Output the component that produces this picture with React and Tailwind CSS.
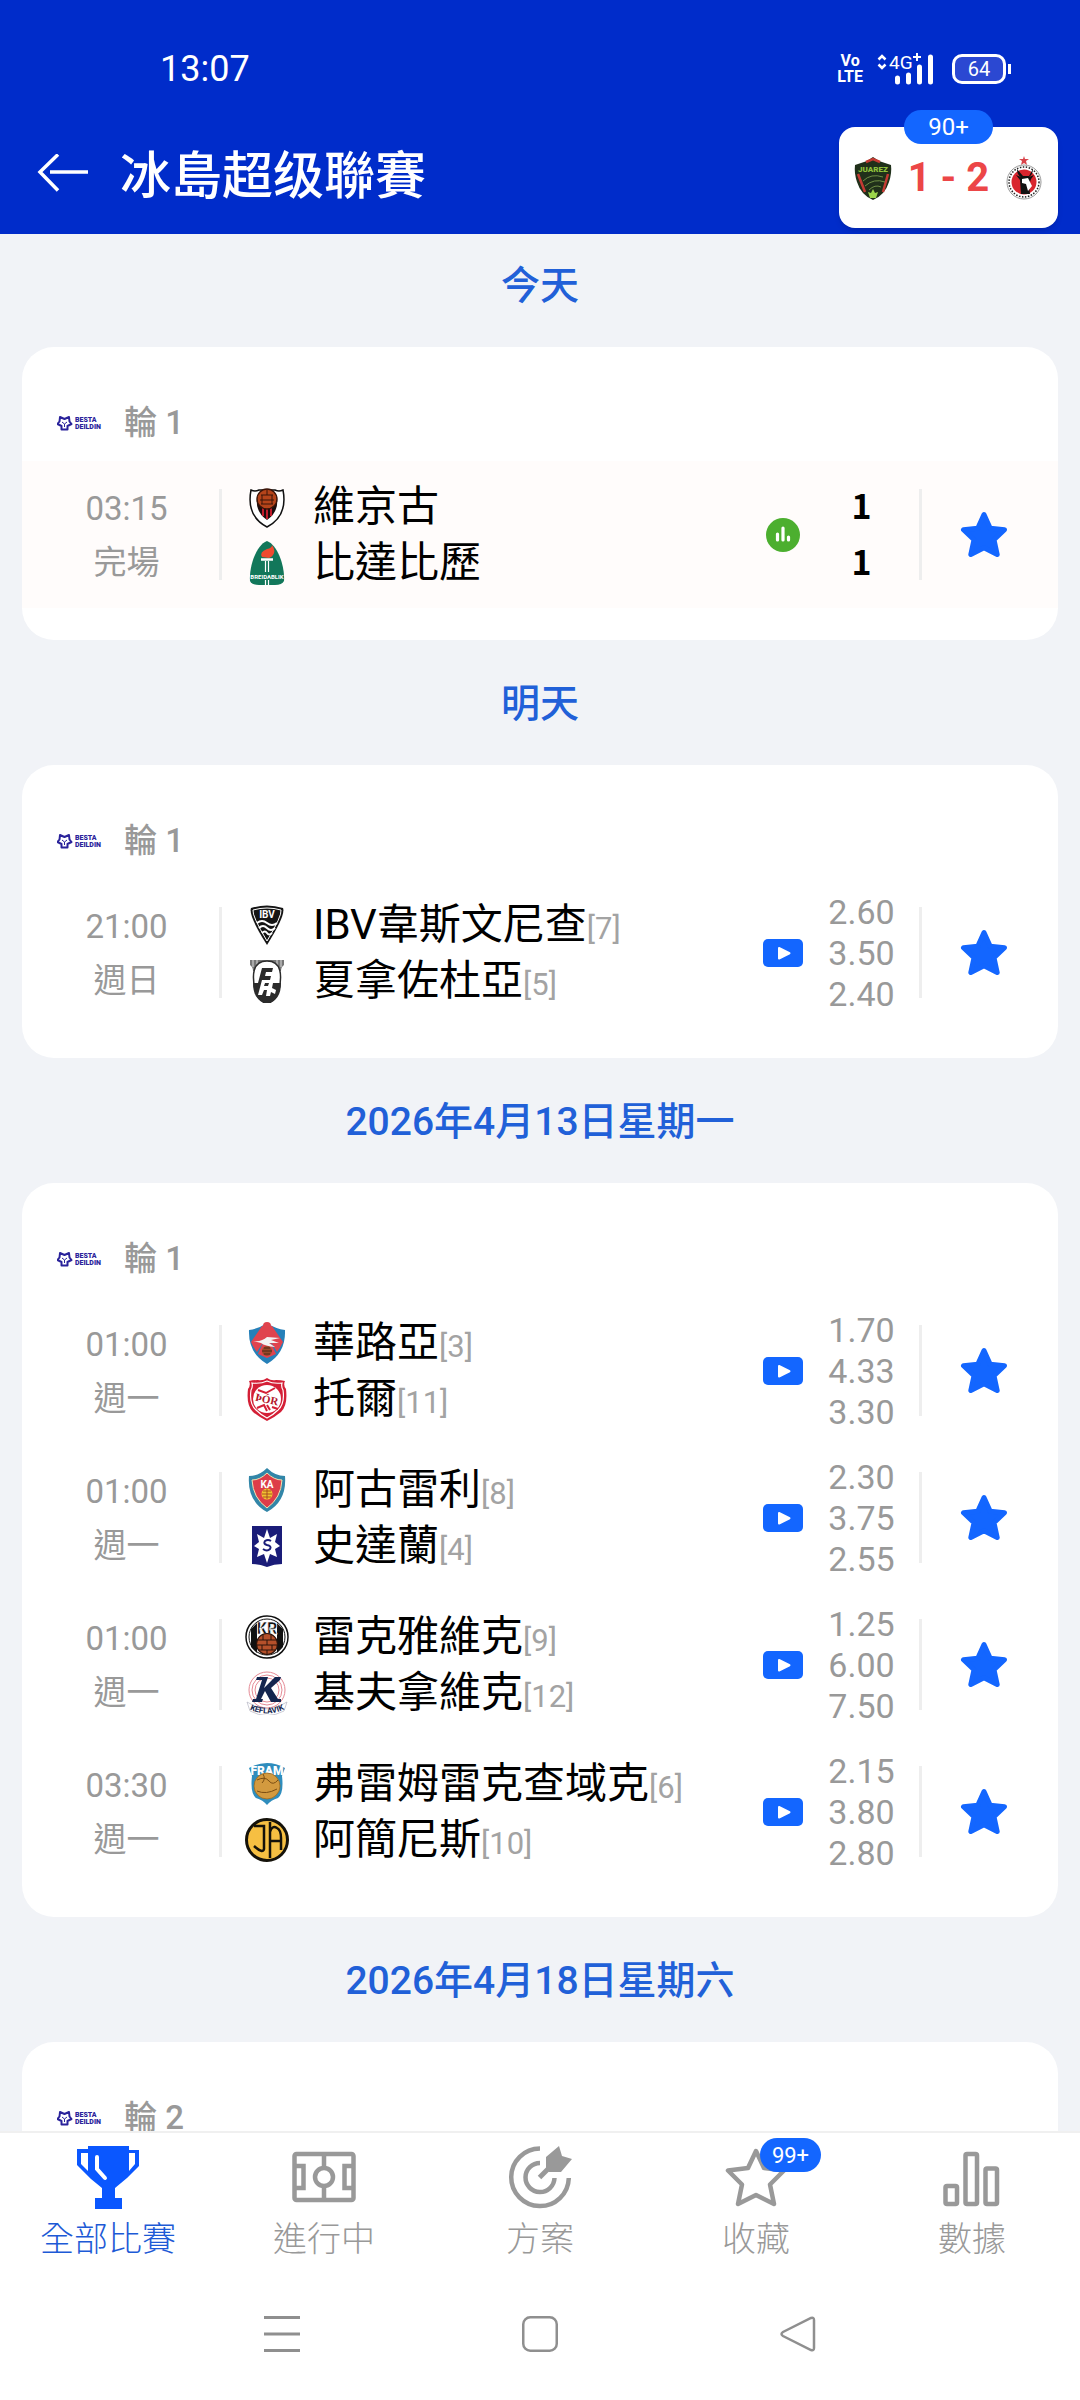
import { useState } from 'react'

const FONT = "font-[Roboto,'Noto_Sans_CJK_TC',sans-serif]"

// ---- team crests, all drawn on a 44x44 canvas ----

const Crest = ({ title, children }) => (
  <svg viewBox="0 0 44 44" className="w-11 h-11 shrink-0" role="img" aria-label={title}>
    {children}
  </svg>
)

const crests = {
  vikingur: (
    <>
      <path d="M6 5 Q10 7 14 5 L30 5 Q34 7 38 5 Q43 31 22 42 Q1 31 6 5Z" fill="#fff" stroke="#111" strokeWidth="1.5" />
      <path d="M12 12 L32 12 Q34 27 22 35 Q10 27 12 12Z" fill="#1a0d0d" />
      <path d="M18 20v11M22 20v14M26 20v11" stroke="#c01c2c" strokeWidth="2" />
      <circle cx="22" cy="14" r="10" fill="#b5441a" stroke="#3a1408" strokeWidth="1.3" />
      <path d="M16 10h12M15 15h14M17 10v9M27 10v9M16 19h12M22 5v5" stroke="#3a1408" strokeWidth="1" fill="none" />
    </>
  ),
  breidablik: (
    <>
      <path d="M22 0 C33 4 40 26 39 40 Q37 44 30 44 L14 44 Q7 44 5 40 C4 26 11 4 22 0Z" fill="#12775a" />
      <path d="M17 16 Q14 11 22 8 Q27 7 27 4 Q31 10 28 14 Q27 16 24 17Z" fill="#f0492f" />
      <path d="M16 18.5h12" stroke="#fff" strokeWidth="2.500" />
      <path d="M20.500 20v24M23.500 20v24" stroke="#fff" strokeWidth="1.200" />
      <rect x="7" y="31" width="30" height="8" fill="#12775a" />
      <text x="22" y="37.500" textAnchor="middle" fontSize="6" fontWeight="700" fill="#fff" fontFamily="Roboto, sans-serif">
        BREIDABLIK
      </text>
    </>
  ),
  ibv: (
    <>
      <path d="M6 5 Q22 0 38 5 Q41 12 22 42 Q3 12 6 5Z" fill="#151515" />
      <path d="M8 7 Q22 3 36 7 Q37 13 22 38 Q7 13 8 7Z" fill="none" stroke="#fff" strokeWidth="1" />
      <text x="22" y="15" textAnchor="middle" fontSize="10" fontWeight="700" fill="#fff" fontFamily="Roboto, sans-serif">IBV</text>
      <path d="M12 20q5-4 10 0t10 0M14 25q4-4 8 0t8 0M17 30q3-3 5 0t5 0" fill="none" stroke="#fff" strokeWidth="2" />
    </>
  ),
  fh: (
    <>
      <path d="M5 1h34v5q-3 2-3 6H8q0-4-3-6Z" fill="#777" />
      <path d="M8 1v7M12 1v7M32 1v7M36 1v7" stroke="#ddd" strokeWidth="1" />
      <path d="M22 2 C37 2 37 17 34 31 Q30 44 22 44 Q14 44 10 31 C7 17 7 2 22 2Z" fill="#fff" stroke="#2b2b2b" strokeWidth="1.5" />
      <path d="M8 24 L36 24 Q36 42 22 44 Q8 42 8 24Z" fill="#2b2b2b" />
      <path d="M17 9h11l-1 4h-6l-1 4h6l-1 4h-6l-1 3h-5Z" fill="#2b2b2b" />
      <path d="M17 21h4l-2 6h4l1-3h4l-1 5 4 2-1 4-4-2-1 4h-4l1-6h-3l-2 5h-4Z" fill="#fff" />
    </>
  ),
  valur: (
    <>
      <path d="M4 9 Q13 8 22 2 Q31 8 40 9 Q41 32 22 43 Q3 32 4 9Z" fill="#2680b9" />
      <path d="M17 5 L27 5 L38 21 Q35 27 32 31 L22 15 L12 31 Q8 26 6 21Z" fill="#e0434e" />
      <path d="M22 13 L31 33 L22 37 L13 33Z" fill="#e0434e" />
      <circle cx="22" cy="5" r="4" fill="#e0434e" />
      <path d="M8 20 Q17 21 22 16 L35 17 L26 19 L34 22 L24 22 L30 26 Q20 25 16 22Z" fill="#f3f3f3" />
      <circle cx="22" cy="30" r="5" fill="#9a4a2a" />
      <path d="M17 30h10M19 27h6M19 33h6" stroke="#3a2015" strokeWidth=".8" />
    </>
  ),
  thor: (
    <>
      <path d="M22 1 Q26 4 31 3 Q36 3 40 4 Q38 8 41 12 Q43 28 36 35 Q30 40 22 44 Q14 40 8 35 Q1 28 3 12 Q6 8 4 4 Q8 3 13 3 Q18 4 22 1Z" fill="#d41f36" />
      <path d="M22 4 Q28 7 37 6 Q36 10 38 13 Q40 27 33 33 Q28 38 22 41 Q16 38 11 33 Q4 27 6 13 Q8 10 7 6 Q16 7 22 4Z" fill="none" stroke="#fff" strokeWidth="1.2" />
      <circle cx="22" cy="22" r="14" fill="#fff" />
      <path d="M13 13l8 3 9-5M12 31l7-3 3 6M27 30l6 2M22 28l3 5" stroke="#d41f36" strokeWidth="2" fill="none" />
      <text x="22" y="26" textAnchor="middle" fontSize="11" fontWeight="700" fill="#b3162b" transform="rotate(12 22 22)" fontFamily="Liberation Serif, serif">ÞÓR</text>
    </>
  ),
  ka: (
    <>
      <path d="M22 0 Q30 8 40 8 Q42 33 22 44 Q2 33 4 8 Q14 8 22 0Z" fill="#3286a8" />
      <path d="M22 5 Q29 12 37 12 Q36 30 22 40 Q8 30 7 12 Q15 12 22 5Z" fill="#dd3c49" stroke="#efe3b0" strokeWidth="1" />
      <text x="22" y="20" textAnchor="middle" fontSize="10" fontWeight="700" fill="#fff" fontFamily="Roboto, sans-serif">KA</text>
      <circle cx="22" cy="26" r="5.5" fill="#f2c230" />
      <path d="M17 26h10M18 23h8M18 29h8M22 21v10" stroke="#a3451f" strokeWidth=".9" />
    </>
  ),
  stjarnan: (
    <>
      <path d="M7 2h30v38q-8 0-15 3-7-3-15-3Z" fill="#1a1c78" />
      <path d="M22 5l3 9 7-4-2 8 5 4-5 3 2 8-7-3-3 9-3-9-7 3 2-8-5-3 5-4-2-8 7 4Z" fill="#fff" />
      <path d="M26 17q-3-2-6 0-2 3 2 4 5 1 3 4-3 3-7 0" fill="none" stroke="#1a1c78" strokeWidth="2" />
    </>
  ),
  kr: (
    <>
      <circle cx="22" cy="22" r="21" fill="#fff" stroke="#111" strokeWidth="1.5" />
      <path d="M6 14v18l6 6V8ZM38 14v18l-6 6V8Z" fill="#111" />
      <text x="22" y="19" textAnchor="middle" fontSize="16" fontWeight="900" fill="#111" stroke="#fff" strokeWidth=".6" fontFamily="Roboto, sans-serif">KR</text>
      <circle cx="22" cy="22" r="18" fill="none" stroke="#111" strokeWidth="1" />
      <circle cx="22" cy="29" r="10.500" fill="#b5502a" stroke="#2a120a" strokeWidth="1.2" />
      <path d="M12 25h20M11 30h22M14 35h16M18 19v6M26 19v6M22 25v5M17 30v5M27 30v5M22 35v5" stroke="#2a120a" strokeWidth="1" />
    </>
  ),
  keflavik: (
    <>
      <circle cx="22" cy="19" r="18" fill="#fff" stroke="#e58a95" strokeWidth="1" />
      <circle cx="22" cy="19" r="15" fill="none" stroke="#e58a95" strokeWidth="1" />
      <circle cx="22" cy="19" r="12" fill="none" stroke="#e58a95" strokeWidth="1" />
      <path d="M12 6h11l-1 3-3 8L30 6h6l-1 3-9 8 7 11h3v3H26l-6-11-4 8h2l-1 3H7l1-3h3l6-19h-6Z" fill="#14264f" />
      <path d="M2 31Q22 45 42 31L39 40Q22 49 5 40Z" fill="#fff" stroke="#aab" strokeWidth=".6" />
      <path id="kef-arc" d="M2 37Q22 48 42 37" fill="none" />
      <text fontSize="8" fontWeight="700" fill="#14264f" textAnchor="middle" fontFamily="Roboto, sans-serif">
        <textPath href="#kef-arc" startOffset="50%">KEFLAVIK</textPath>
      </text>
    </>
  ),
  fram: (
    <>
      <path d="M4 6 Q22 -4 40 6 L37 14 Q39 31 33 36 Q26 38 22 43 Q18 38 11 36 Q5 31 7 14Z" fill="#2f8dbd" />
      <text x="22" y="13" textAnchor="middle" fontSize="12" fontWeight="900" fill="#fff" fontFamily="Roboto, sans-serif">FRAM</text>
      <circle cx="22" cy="24" r="13" fill="#d39a3f" stroke="#9b6a20" strokeWidth=".8" />
      <path d="M12 18q8-4 12 1t9-1M12 29q9 4 20-2M18 12q3 5-1 9" stroke="#7a4d12" strokeWidth="1" fill="none" />
    </>
  ),
  ia: (
    <>
      <circle cx="22" cy="22" r="20.5" fill="#f6bf42" stroke="#15120a" strokeWidth="3" />
      <path d="M9 8h10v23q-1 5-10-3M25 40V4M25 14q2-7 7-4 4 2 4 10v12M25 23h11" fill="none" stroke="#15120a" strokeWidth="2.500" />
    </>
  ),
  juarez: (
    <>
      <path d="M22 1l6 4 12 4q1 8-2 17Q34 39 22 44 10 39 6 26 3 17 4 9l12-4Z" fill="#20301a" />
      <path d="M7 18l7 18M37 18l-5 18M15 6l7-3 7 3" stroke="#c43a33" strokeWidth="2.5" fill="none" />
      <text x="22" y="16" textAnchor="middle" fontSize="8" fontWeight="900" fill="#8fc23c" fontFamily="Roboto, sans-serif">JUAREZ</text>
      <path d="M12 25q8-8 20-4M14 30q9-8 20-4M18 34q6-6 12-3" stroke="#6f8f45" strokeWidth="1" fill="none" />
      <path d="M22 33l2 4 3-1-2 6h-6l-2-6 3 1Z" fill="#9bd54a" />
    </>
  ),
  tijuana: (
    <>
      <path d="M22 0l1 3h4l-3 2 1 4-3-2-3 2 1-4-3-2h4Z" fill="#d8434a" />
      <circle cx="22" cy="26" r="17" fill="#fff" stroke="#999" strokeWidth="1" />
      <circle cx="22" cy="26" r="15" fill="none" stroke="#222" strokeWidth="1.5" strokeDasharray="1.5 1.5" />
      <circle cx="22" cy="26" r="12.500" fill="#d9252e" />
      <path d="M15 13q0 6 4 8l-5-2 4 5 1 14h9l-1-9 2-6 3-4-5 2q4-3 4-8l-4 7h-6Z" fill="#111" />
      <path d="M20 23l6-1 4 8-4 5-2-7-4-1Z" fill="#fff" />
    </>
  )
}

const days = [
  {
    label: '今天',
    round: 1,
    matches: [
      { time: '03:15', state: '完場', finished: true, home: ['vikingur', '維京古'], away: ['breidablik', '比達比歷'], score: [1, 1] }
    ]
  },
  {
    label: '明天',
    round: 1,
    matches: [
      { time: '21:00', state: '週日', home: ['ibv', 'IBV韋斯文尼查', 7], away: ['fh', '夏拿佐杜亞', 5], odds: ['2.60', '3.50', '2.40'] }
    ]
  },
  {
    label: '2026年4月13日星期一',
    round: 1,
    matches: [
      { time: '01:00', state: '週一', home: ['valur', '華路亞', 3], away: ['thor', '托爾', 11], odds: ['1.70', '4.33', '3.30'] },
      { time: '01:00', state: '週一', home: ['ka', '阿古雷利', 8], away: ['stjarnan', '史達蘭', 4], odds: ['2.30', '3.75', '2.55'] },
      { time: '01:00', state: '週一', home: ['kr', '雷克雅維克', 9], away: ['keflavik', '基夫拿維克', 12], odds: ['1.25', '6.00', '7.50'] },
      { time: '03:30', state: '週一', home: ['fram', '弗雷姆雷克查域克', 6], away: ['ia', '阿簡尼斯', 10], odds: ['2.15', '3.80', '2.80'] }
    ]
  },
  { label: '2026年4月18日星期六', round: 2, matches: [] }
]

const STAR = 'M24 3.5 L30.2 17.2 L44.5 18.8 L34 28.8 L37.2 43.5 L24 36.8 L10.8 43.5 L14 28.8 L3.5 18.8 L17.8 17.2 Z'

const StarIcon = () => (
  <svg viewBox="0 0 48 48" className="w-12 h-12" aria-hidden="true">
    <path d={STAR} fill="#1366ff" stroke="#1366ff" strokeWidth="5" strokeLinejoin="round" />
  </svg>
)

const StatsIcon = () => (
  <svg viewBox="0 0 34 34" className="w-[34px] h-[34px]" role="img" aria-label="數據">
    <circle cx="17" cy="17" r="17" fill="#4caf2f" />
    <path d="M11.5 16v6M17 10v12M22.5 19v3" stroke="#fff" strokeWidth="3.2" strokeLinecap="round" />
  </svg>
)

const VideoIcon = () => (
  <svg viewBox="0 0 40 28" className="w-10 h-7" role="img" aria-label="直播">
    <rect width="40" height="28" rx="5" fill="#1366ff" />
    <path d="M16 9v10.5l10.500-5.250Z" fill="#fff" stroke="#fff" strokeWidth="2" strokeLinejoin="round" />
  </svg>
)

const LeagueLogo = () => (
  <svg viewBox="0 0 46 16" className="w-[46px] h-4" role="img" aria-label="Besta deildin">
    <path d="M3 2l4.500 2L12 2l.5 4.500L14.500 9l-4 2v3.500h-6V11l-4-2 2-2.500Z" fill="none" stroke="#2a239b" strokeWidth="2" strokeLinejoin="round" />
    <path d="M5 7l2.500 2L10 7M7.500 9v3" fill="none" stroke="#2a239b" strokeWidth="1" />
    <g fill="#2a239b" fontSize="7" fontWeight="900" fontFamily="Roboto, sans-serif">
      <text x="18" y="7">BESTA</text>
      <text x="18" y="14">DEILDIN</text>
    </g>
  </svg>
)

const StatusBar = () => (
  <div className="flex h-[138px] items-center justify-between pl-40 pr-[69px] text-white">
    <span className="text-4xl">13:07</span>
    <div className="flex items-center">
      <div className="mr-[14px] text-center text-base leading-4 font-bold">
        Vo
        <br />
        LTE
      </div>
      <svg viewBox="0 0 58 34" className="mr-[17px] w-[58px] h-[34px]" aria-hidden="true">
        <path d="M1.500 7.500 5 4l3.500 3.500M1.500 12.500 5 16l3.500-3.500" fill="none" stroke="#fff" strokeWidth="2.500" />
        <text x="12" y="17" fontSize="19" fill="#fff" fontFamily="Roboto, sans-serif">4G</text>
        <path d="M36 5h8M40 1v8" stroke="#fff" strokeWidth="2" />
        <path d="M20.500 26v4M31.500 23v7M42.500 15v15M53.500 5v25" stroke="#fff" strokeWidth="5" strokeLinecap="round" />
      </svg>
      <div className="flex h-[30px] w-[54px] items-center justify-center rounded-[10px] border-[3px] border-white bg-[#2b48d2] text-xl leading-5">
        64
      </div>
      <div className="ml-0.5 h-2.5 w-[3px] bg-white" />
    </div>
  </div>
)

const LiveScore = () => (
  <div className="absolute top-[127px] right-[22px] h-[101px] w-[219px] rounded-2xl bg-white shadow-md">
    <div className="absolute -top-[17px] left-[65px] flex h-[34px] w-[89px] items-center justify-center rounded-full bg-[#1366ff] text-2xl text-white">
      90+
    </div>
    <div className="flex h-full items-center justify-between px-3">
      <Crest title="FC Juárez">{crests.juarez}</Crest>
      <span className="text-[40px] font-bold text-[#ec4647]">1 - 2</span>
      <Crest title="Tijuana">{crests.tijuana}</Crest>
    </div>
  </div>
)

const Team = ({ team }) => {
  const [crest, name, rank] = team
  return (
    <div className="flex h-14 items-center gap-6">
      <Crest title={name}>{crests[crest]}</Crest>
      <div className="flex items-baseline whitespace-nowrap">
        <span className="text-[42px] leading-[56px] text-black">{name}</span>
        {rank && <span className="text-[31px] text-[#a3a3a3]">[{rank}]</span>}
      </div>
    </div>
  )
}

const Divider = () => <div className="h-[91px] w-[3px] shrink-0 bg-[#eee]" />

const MatchRow = ({ match }) => {
  const [starred, setStarred] = useState(true)

  return (
    <li className={`flex h-[147px] items-center ${match.finished ? 'bg-[#fffcfb]' : ''}`}>
      <div className="ml-3 w-[185px] shrink-0 pt-0.5 text-center text-[33px] leading-[54px] text-[#999]">
        <div>{match.time}</div>
        <div>{match.state}</div>
      </div>
      <Divider />
      <div className="min-w-0 flex-1 pl-[23px]">
        <Team team={match.home} />
        <Team team={match.away} />
      </div>
      <div className="flex w-[42px] shrink-0 justify-center">
        {match.finished ? <StatsIcon /> : <VideoIcon />}
      </div>
      {match.score && (
        <div className="w-[115px] shrink-0 pb-1 text-center font-['Noto_Sans_CJK_TC',sans-serif] text-[34px] leading-[56px] font-bold text-black">
          <div>{match.score[0]}</div>
          <div>{match.score[1]}</div>
        </div>
      )}
      {match.odds && (
        <div className="w-[115px] shrink-0 pt-0.5 text-center text-[34px] leading-[41px] text-[#999]">
          {match.odds.map((odd, i) => (
            <div key={i}>{odd}</div>
          ))}
        </div>
      )}
      <Divider />
      <div className="flex w-[136px] shrink-0 justify-center pr-3">
        <button
          type="button"
          aria-label="收藏"
          aria-pressed={starred}
          onClick={() => setStarred(!starred)}
          className={starred ? '' : 'opacity-30'}
        >
          <StarIcon />
        </button>
      </div>
    </li>
  )
}

const DaySection = ({ day }) => (
  <section>
    <h2 className="flex h-[125px] items-center justify-center pt-1 text-[39px] font-medium text-[#2160d8]">
      {day.label}
    </h2>
    <div className="mx-[22px] rounded-[32px] bg-white pb-8">
      <div className="flex h-[114px] items-center gap-[21px] pt-[38px] pl-[35px]">
        <LeagueLogo />
        <span className="text-[33px] font-medium text-[#999]">輪 {day.round}</span>
      </div>
      <ul>
        {day.matches.map((match, i) => (
          <MatchRow key={i} match={match} />
        ))}
      </ul>
    </div>
  </section>
)

const TrophyIcon = () => (
  <svg viewBox="0 0 64 64" className="w-16 h-16" aria-hidden="true">
    <path d="M12 1h41v4h10v16L51 33 39 43v10h7v11H19V53h7V43L15 34 1 20V4h11Z" fill="#0a57ff" />
    <path d="M5 8h7v18l-7-7ZM53 8h6v11l-6 7Z" fill="#fff" />
    <path d="M21 12v12l8 9" fill="none" stroke="#fff" strokeWidth="4" strokeLinecap="round" />
  </svg>
)

const PitchIcon = () => (
  <svg viewBox="0 0 64 64" className="w-16 h-16" fill="none" stroke="#999" strokeWidth="4.500" aria-hidden="true">
    <rect x="2.500" y="9" width="59" height="46" rx="2" />
    <circle cx="32" cy="32" r="9" />
    <path d="M32 9v14M32 41v14M2 21h9.500v22H2M62 21h-9.500v22H62" />
  </svg>
)

const TargetIcon = () => (
  <svg viewBox="0 0 64 64" className="w-16 h-16" fill="none" stroke="#999" strokeWidth="4.500" aria-hidden="true">
    <path d="M32 3.500A28.800 28.800 0 1 0 60.800 33" />
    <path d="M32 18A14.500 14.500 0 1 0 46.500 33" />
    <path d="M31.500 32.500 44 20" strokeWidth="5" />
    <path d="M51 1l3 10 10 3-11 13H41l-3-3V12Z" fill="#999" stroke="none" />
  </svg>
)

const FavIcon = () => (
  <svg viewBox="0 0 64 64" className="w-16 h-16" aria-hidden="true">
    <path d="M32 6l8 17 20 2.500-14 14L50 59 32 50 14 59l4-19.500-14-14L24 23Z" fill="none" stroke="#999" strokeWidth="4.500" strokeLinejoin="round" />
  </svg>
)

const DataIcon = () => (
  <svg viewBox="0 0 64 64" className="w-16 h-16" fill="none" stroke="#999" strokeWidth="4.500" aria-hidden="true">
    <rect x="5.500" y="41" width="11.500" height="18" rx="1.500" />
    <rect x="25.500" y="9" width="11.500" height="50" rx="1.500" />
    <rect x="45.500" y="23.500" width="11.500" height="35.500" rx="1.500" />
  </svg>
)

const tabs = [
  { label: '全部比賽', Icon: TrophyIcon },
  { label: '進行中', Icon: PitchIcon },
  { label: '方案', Icon: TargetIcon },
  { label: '收藏', Icon: FavIcon, badge: '99+' },
  { label: '數據', Icon: DataIcon }
]

const TabBar = () => {
  const [active, setActive] = useState('全部比賽')

  return (
    <nav className="grid grid-cols-5 border-t-2 border-[#f0f0f0] pt-3 pb-[3px]">
      {tabs.map(({ label, Icon, badge }) => (
        <button
          key={label}
          type="button"
          onClick={() => setActive(label)}
          className={`flex flex-col items-center gap-1 ${label === active ? 'text-[#1d5ad6]' : 'text-[#999]'}`}
        >
          <span className="relative">
            <Icon />
            {badge && (
              <span className="absolute -top-[7px] left-9 flex h-[34px] w-[61px] items-center justify-center rounded-full bg-[#1366ff] text-[22px] text-white">
                {badge}
              </span>
            )}
          </span>
          <span className="text-[34px] leading-[52px] font-light">{label}</span>
        </button>
      ))}
    </nav>
  )
}

const SystemNav = () => (
  <div className="flex h-[132px] items-center justify-center gap-[222px]">
    <button type="button" aria-label="最近">
      <svg viewBox="0 0 36 36" className="w-9 h-9" stroke="#8f8f8f" strokeWidth="3" aria-hidden="true">
        <path d="M0 1.500h36M0 18h36M0 34.500h36" />
      </svg>
    </button>
    <button type="button" aria-label="主頁">
      <svg viewBox="0 0 36 36" className="w-9 h-9" fill="none" stroke="#8f8f8f" strokeWidth="2.500" aria-hidden="true">
        <rect x="1.250" y="1.250" width="33.500" height="33.500" rx="7" />
      </svg>
    </button>
    <button type="button" aria-label="返回">
      <svg viewBox="0 0 36 36" className="w-9 h-9" fill="none" stroke="#8f8f8f" strokeWidth="2.500" aria-hidden="true">
        <path d="M31 2 Q34 1 34 4V32Q34 35 31 34L3 20Q0 18 3 16Z" />
      </svg>
    </button>
  </div>
)

const App = () => (
  <div className={`flex h-screen flex-col overflow-hidden bg-[#f1f3f7] ${FONT}`}>
    <header className="relative shrink-0 bg-[#002cca]">
      <StatusBar />
      <div className="flex h-24 items-center gap-[30px] pb-5 pl-9">
        <button type="button" aria-label="返回">
          <svg viewBox="0 0 54 44" className="w-[54px] h-11" fill="none" stroke="#fff" strokeWidth="3.500" aria-hidden="true">
            <path d="M22 .500 4 18l18 18.500M14 18h38" />
          </svg>
        </button>
        <h1 className="pt-0.5 text-[51px] leading-[60px] font-medium text-white">冰島超级聯賽</h1>
      </div>
      <LiveScore />
    </header>

    <main className="min-h-0 flex-1 overflow-hidden">
      <div className="-mt-3">
        {days.map(day => (
          <DaySection key={day.label} day={day} />
        ))}
      </div>
    </main>

    <footer className="shrink-0 bg-white">
      <TabBar />
      <SystemNav />
    </footer>
  </div>
)

export default App
